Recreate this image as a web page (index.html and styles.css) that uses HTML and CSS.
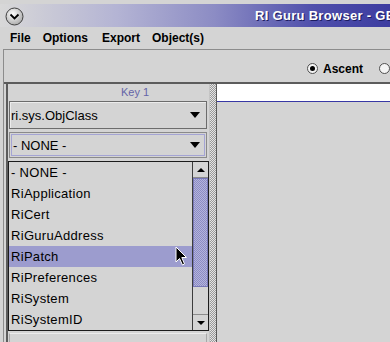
FILE: index.html
```html
<!DOCTYPE html>
<html lang="en">
<head>
  <meta charset="UTF-8" />
  <meta name="viewport" content="width=device-width, initial-scale=1.0"/>
  <title>RI Guru Browser</title>
  <link rel="stylesheet" href="styles.css">
</head>
<body>

  <header class="titlebar">
    <div class="title-inner">
      <span class="win-btn">
        <svg width="19" height="19" viewBox="0 0 19 19">
          <defs>
            <radialGradient id="knob" cx="40%" cy="35%" r="70%">
              <stop offset="0" stop-color="#ffffff"/>
              <stop offset="1" stop-color="#a8a8a8"/>
            </radialGradient>
          </defs>
          <circle cx="9.5" cy="9.5" r="8.5" fill="url(#knob)" stroke="#404040" stroke-width="1"/>
          <path d="M5.5 7.5 L9.5 11.5 L13.5 7.5" fill="none" stroke="#000" stroke-width="1.8"/>
        </svg>
      </span>
      <span class="title">RI Guru Browser - GE</span>
    </div>
  </header>

  <nav class="menubar">
    <span>File</span>
    <span>Options</span>
    <span>Export</span>
    <span>Object(s)</span>
  </nav>

  <div class="frame">
    <div class="toolbar">
      <label class="radio checked"><span class="dot"></span>Ascent</label>
      <label class="radio"><span class="dot"></span>Descent</label>
    </div>

    <div class="main">
      <div class="left">
        <div class="key-head">Key 1</div>
        <div class="combo">
          <span>ri.sys.ObjClass</span>
          <span class="arrow"></span>
        </div>
        <div class="combo focus">
          <span>- NONE -</span>
          <span class="arrow"></span>
        </div>
        <div class="list">
          <ul class="items">
            <li>- NONE -</li>
            <li>RiApplication</li>
            <li>RiCert</li>
            <li>RiGuruAddress</li>
            <li class="selected">RiPatch</li>
            <li>RiPreferences</li>
            <li>RiSystem</li>
            <li>RiSystemID</li>
          </ul>
          <div class="scrollbar">
            <div class="sb-btn"><span class="tri up"></span></div>
            <div class="sb-track">
              <div class="sb-thumb"></div>
            </div>
            <div class="sb-btn"><span class="tri"></span></div>
          </div>
        </div>
        <div class="below"></div>
      </div>

      <div class="splitter"></div>

      <div class="right">
        <div class="field"></div>
      </div>
    </div>
  </div>

  <svg class="cursor" width="14" height="21" viewBox="0 0 14 21">
    <path d="M1 1 L1 16 L4.5 12.5 L7.5 19 L9.5 18 L6.8 11.5 L11.5 11.5 Z" fill="#000" stroke="#fff" stroke-width="1"/>
  </svg>

</body>
</html>
```

FILE: styles.css
```css
body, html {
  margin: 0;
  padding: 0;
  width: 390px;
  height: 342px;
  overflow: hidden;
  background: #d4d4d4;
  font-family: "Liberation Sans", Arial, sans-serif;
  color: #000;
}

/* title bar */
.titlebar {
  height: 27px;
  padding-top: 4px;
  box-sizing: border-box;
  background: #d4d4d4;
}

.title-inner {
  height: 23px;
  display: flex;
  align-items: center;
  background: linear-gradient(to right, #d8d8d8 0%, #b4b4d4 30%, #8c8cc4 55%, #5050ac 80%, #3c3ca0 100%);
  white-space: nowrap;
  overflow: hidden;
}

.win-btn {
  display: flex;
  margin-left: 5px;
  margin-top: 2px;
}

.title {
  margin-left: 231px;
  color: #fff;
  font-weight: bold;
  font-size: 13px;
  letter-spacing: 0.3px;
  text-shadow: 1px 1px 0 #1c1c60;
}

/* menu */
.menubar {
  height: 22px;
  display: flex;
  align-items: center;
  gap: 12px;
  padding-left: 10px;
  font-size: 12px;
  font-weight: bold;
}

.menubar span:nth-child(3) {
  margin-left: 2px;
}

/* frame */
.frame {
  margin-left: 3px;
  border-top: 1px solid #8c8c8c;
  border-left: 1px solid #8c8c8c;
}

.toolbar {
  height: 32px;
  display: flex;
  align-items: center;
  justify-content: flex-start;
  padding-left: 303px;
  padding-top: 5px;
  box-sizing: border-box;
  gap: 16px;
  white-space: nowrap;
  font-size: 12px;
  font-weight: bold;
}

.radio {
  display: flex;
  align-items: center;
  gap: 5px;
}

.dot {
  width: 11px;
  height: 11px;
  border-radius: 50%;
  border: 1px solid #505050;
  background: #f4f4f4;
  position: relative;
  box-sizing: border-box;
}

.radio.checked .dot::after {
  content: "";
  position: absolute;
  left: 2px;
  top: 2px;
  width: 5px;
  height: 5px;
  border-radius: 50%;
  background: #000;
}

.main {
  display: flex;
  padding-left: 2px;
  border-top: 2px solid #5c5c5c;
  height: 260px;
}

/* left table column */
.left {
  width: 201px;
  border-left: 2px solid #5c5c5c;
  display: flex;
  flex-direction: column;
}

.key-head {
  height: 17px;
  line-height: 16px;
  font-size: 11px;
  color: #6464a8;
  padding-left: 113px;
}

.combo {
  height: 28px;
  margin: 0 2px 0 1px;
  border: 1px solid #6c6c6c;
  box-sizing: border-box;
  display: flex;
  align-items: center;
  justify-content: space-between;
  padding: 0 6px 0 1px;
  font-size: 13px;
  box-shadow: inset 1px 1px 0 #ececec;
}

.combo.focus {
  margin-top: 3px;
  height: 26px;
  border-color: #8a8a8a;
  box-shadow: inset 0 0 0 1px #d4d4d4, inset 0 0 0 2px #a4a4d4;
  padding-left: 3px;
}

.arrow {
  width: 0;
  height: 0;
  border-left: 5px solid transparent;
  border-right: 5px solid transparent;
  border-top: 6px solid #000;
}

.list {
  margin-top: 3px;
  height: 170px;
  border: 1px solid #1c1c1c;
  box-sizing: border-box;
  display: flex;
}

.items {
  list-style: none;
  margin: 0;
  padding: 0;
  flex: 1;
  font-size: 13px;
}

.items li {
  height: 21px;
  line-height: 21px;
  padding-left: 2px;
  letter-spacing: 0.3px;
}

.items li.selected {
  background: #9c9cce;
}

.scrollbar {
  width: 15px;
  border-left: 1px solid #3c3c3c;
  display: flex;
  flex-direction: column;
}

.sb-btn {
  height: 16px;
  display: flex;
  align-items: center;
  justify-content: center;
  border-bottom: 1px solid #8c8c8c;
  box-sizing: border-box;
}

.sb-btn:last-child {
  border-bottom: none;
  border-top: 1px solid #8c8c8c;
}

.tri {
  width: 0;
  height: 0;
  border-left: 4px solid transparent;
  border-right: 4px solid transparent;
  border-top: 4px solid #000;
}

.tri.up {
  border-top: none;
  border-bottom: 4px solid #000;
}

.sb-track {
  flex: 1;
}

.sb-thumb {
  height: 109px;
  border: 1px solid #7878b8;
  box-sizing: border-box;
  background: repeating-conic-gradient(#8c8cc4 0 25%, #b4b4dc 0 50%) 0 0 / 2px 2px;
}

.below {
  margin: 2px 2px 0 1px;
  flex: 1;
  border-top: 1px solid #ececec;
  border-left: 1px solid #a8a8a8;
  border-right: 1px solid #a8a8a8;
}

.splitter {
  width: 7px;
  background: repeating-conic-gradient(#9a9a9a 0 25%, #e4e4e4 0 50%) 0 0 / 2px 2px;
  border-left: 1px solid #c4c4c4;
  box-sizing: border-box;
}

.right {
  flex: 1;
  border-left: 1px solid #5c5c5c;
}

.field {
  height: 17px;
  background: #fff;
  border-bottom: 1px solid #3838a4;
}

.cursor {
  position: absolute;
  left: 175px;
  top: 246px;
}
```
